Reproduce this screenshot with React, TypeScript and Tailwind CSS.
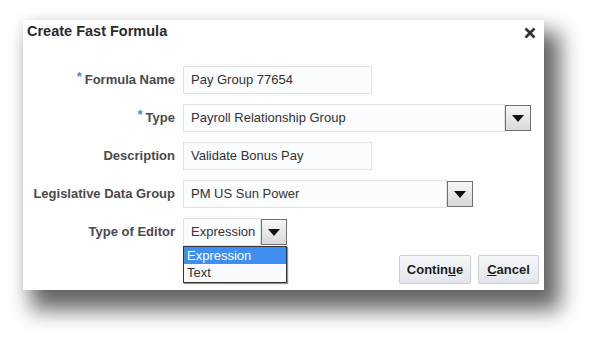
import type { ReactNode } from "react";

const font = { fontFamily: '"Liberation Sans", Arial, sans-serif' };

function Arrow() {
  return (
    <div className="flex h-[26px] w-[26px] shrink-0 items-center justify-center border border-[#6f6f6f] bg-gradient-to-b from-[#f7f7f7] to-[#d9d9d9]">
      <svg width="12" height="7" viewBox="0 0 12 7">
        <path d="M0 0h12L6 7z" fill="#111" />
      </svg>
    </div>
  );
}

function Label({ children, req }: { children: ReactNode; req?: boolean }) {
  return (
    <div className="flex items-center justify-end text-[13px] font-bold text-[#4a4a4a]">
      {req && <span className="mr-[3px] -mt-[7px] text-[13px] text-[#3f8fe0]">*</span>}
      {children}
    </div>
  );
}

function Input({ value, w }: { value: string; w: string }) {
  return (
    <div
      className={`flex h-[28px] items-center border border-[#dfe3e6] bg-[#fbfcfd] px-[7px] text-[13px] text-[#333] ${w}`}
    >
      {value}
    </div>
  );
}

function Select({ value, w }: { value: string; w: string }) {
  return (
    <div className="flex items-center">
      <div
        className={`flex h-[28px] items-center border border-[#dfe3e6] bg-[#fbfcfd] px-[7px] text-[13px] text-[#333] ${w}`}
      >
        {value}
      </div>
      <Arrow />
    </div>
  );
}

export default function App() {
  return (
    <div className="min-h-screen bg-white pl-[23px] pt-[20px]" style={font}>
      <div className="relative flex h-[270px] w-[521px] flex-col bg-white shadow-[12px_16px_20px_4px_rgba(0,0,0,0.6),0_0_10px_rgba(0,0,0,0.06)]">
        <div className="flex items-center justify-between pl-[4px] pr-[8px] pt-[2px]">
          <h1 className="text-[14.5px] font-bold leading-[16px] text-[#2b2b2b]">Create Fast Formula</h1>
          <svg width="12" height="12" viewBox="0 0 12 12" className="mt-[5px]">
            <path d="M1.5 1.5l9 9M10.5 1.5l-9 9" stroke="#333" strokeWidth="2.6" />
          </svg>
        </div>

        <div className="mt-[27px] grid grid-cols-[152px_auto] gap-x-[8px] gap-y-[10px]">
          <Label req>Formula Name</Label>
          <Input value="Pay Group 77654" w="w-[189px]" />

          <Label req>Type</Label>
          <Select value="Payroll Relationship Group" w="w-[322px]" />

          <Label>Description</Label>
          <Input value="Validate Bonus Pay" w="w-[189px]" />

          <Label>Legislative Data Group</Label>
          <Select value="PM US Sun Power" w="w-[264px]" />

          <Label>Type of Editor</Label>
          <div className="relative">
            <Select value="Expression" w="w-[78px]" />
            <div className="absolute left-0 top-[28px] w-[104px] border border-[#333] bg-white text-[13px] shadow-[1px_1px_1px_rgba(0,0,0,0.4)]">
              <div className="flex h-[17px] items-center bg-[#3f8ef0] px-[3px] text-white">Expression</div>
              <div className="flex h-[18px] items-center bg-[#f8fafc] px-[3px] text-[#333]">Text</div>
            </div>
          </div>
        </div>

        <div className="mt-auto flex justify-end gap-[7px] pb-[6px] pr-[5px]">
          <button className="h-[29px] w-[72px] rounded-[2px] border border-[#c9ced3] bg-gradient-to-b from-[#f5f7f9] to-[#e3e7eb] text-[13px] font-bold text-[#1e1e1e]">
            Contin<span className="underline">u</span>e
          </button>
          <button className="h-[29px] w-[61px] rounded-[2px] border border-[#c9ced3] bg-gradient-to-b from-[#f5f7f9] to-[#e3e7eb] text-[13px] font-bold text-[#1e1e1e]">
            <span className="underline">C</span>ancel
          </button>
        </div>
      </div>
    </div>
  );
}
